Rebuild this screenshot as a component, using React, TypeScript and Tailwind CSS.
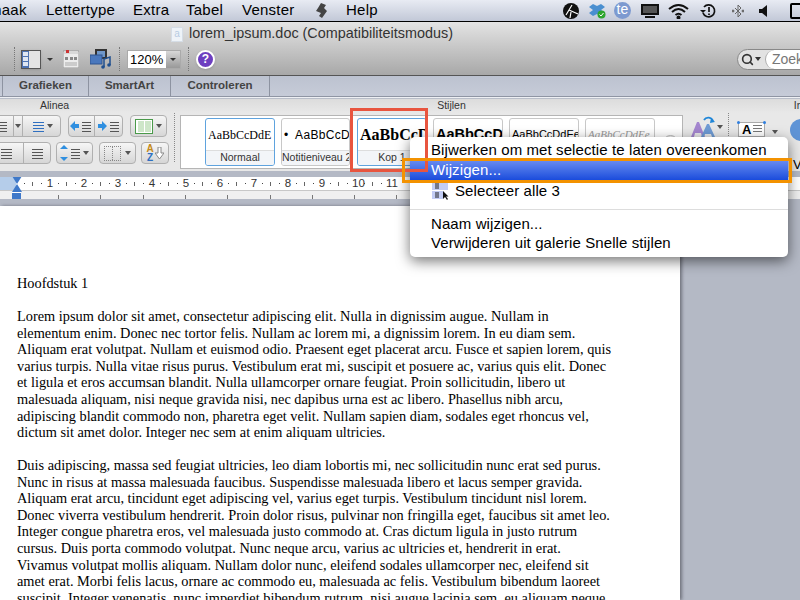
import React from "react";
import { Search } from "lucide-react";

const para1 = [
  "Lorem ipsum dolor sit amet, consectetur adipiscing elit. Nulla in dignissim augue. Nullam in",
  "elementum enim. Donec nec tortor felis. Nullam ac lorem mi, a dignissim lorem. In eu diam sem.",
  "Aliquam erat volutpat. Nullam et euismod odio. Praesent eget placerat arcu. Fusce et sapien lorem, quis",
  "varius turpis. Nulla vitae risus purus. Vestibulum erat mi, suscipit et posuere ac, varius quis elit. Donec",
  "et ligula et eros accumsan blandit. Nulla ullamcorper ornare feugiat. Proin sollicitudin, libero ut",
  "malesuada aliquam, nisi neque gravida nisi, nec dapibus urna est ac libero. Phasellus nibh arcu,",
  "adipiscing blandit commodo non, pharetra eget velit. Nullam sapien diam, sodales eget rhoncus vel,",
  "dictum sit amet dolor. Integer nec sem at enim aliquam ultricies.",
];

const para2 = [
  "Duis adipiscing, massa sed feugiat ultricies, leo diam lobortis mi, nec sollicitudin nunc erat sed purus.",
  "Nunc in risus at massa malesuada faucibus. Suspendisse malesuada libero et lacus semper gravida.",
  "Aliquam erat arcu, tincidunt eget adipiscing vel, varius eget turpis. Vestibulum tincidunt nisl lorem.",
  "Donec viverra vestibulum hendrerit. Proin dolor risus, pulvinar non fringilla eget, faucibus sit amet leo.",
  "Integer congue pharetra eros, vel malesuada justo commodo at. Cras dictum ligula in justo rutrum",
  "cursus. Duis porta commodo volutpat. Nunc neque arcu, varius ac ultricies et, hendrerit in erat.",
  "Vivamus volutpat mollis aliquam. Nullam dolor nunc, eleifend sodales ullamcorper nec, eleifend sit",
  "amet erat. Morbi felis lacus, ornare ac commodo eu, malesuada ac felis. Vestibulum bibendum laoreet",
  "suscipit. Integer venenatis, nunc imperdiet bibendum rutrum, nisi augue lacinia sem, eu aliquam neque",
];

function MenuBar() {
  return (
    <div className="h-[22px] shrink-0 flex items-center border-b border-black bg-gradient-to-b from-[#e8ebf3] to-[#c2c8d7] text-[15px] tracking-[0.25px] text-black overflow-hidden">
      <span className="ml-[-11px] w-[38px] shrink-0">maak</span>
      <span className="ml-[19px] w-[68px] shrink-0">Lettertype</span>
      <span className="ml-[19px] w-[34px] shrink-0">Extra</span>
      <span className="ml-[19px] w-[37px] shrink-0">Tabel</span>
      <span className="ml-[19px] w-[53px] shrink-0">Venster</span>
      <svg width="12" height="16" viewBox="0 0 12 16" className="ml-[20px] shrink-0">
        <path d="M6 0 L11 2 L9 5 L12 8 L7 15 L4 13 L6 10 L1 8 L3 5 Z" fill="#444" />
      </svg>
      <span className="ml-[19px] shrink-0">Help</span>
      <div className="ml-[185px] flex items-center shrink-0">
        <svg width="16" height="16" viewBox="0 0 16 16"><circle cx="8" cy="8" r="8" fill="#111" /><path d="M3 12 L9 2 M6 7 L15 11 M8 9 L7 15" stroke="#fff" strokeWidth="1.2" /></svg>
        <svg width="17" height="16" viewBox="0 0 17 16" className="ml-[10px]"><path d="M0 4 L4 1 L8 3 L12 1 L16 4 L12 7 L16 10 L12 13 L8 11 L4 13 L0 10 L4 7 Z" fill="#4a8fd0" /><circle cx="12.500" cy="11.500" r="4" fill="#2da52d" /><path d="M10.500 11.500 L12 13 L14.500 10" stroke="#fff" fill="none" /></svg>
        <div className="ml-[8px] w-[17px] h-[17px] rounded-full bg-[#7d9ad0] text-white text-[14px] tracking-normal leading-[15px] text-center">te</div>
        <svg width="18" height="16" viewBox="0 0 18 16" className="ml-[10px]"><rect x="0" y="1" width="18" height="11" fill="#111" /><rect x="2" y="3" width="14" height="7" fill="#555" /><rect x="4" y="13" width="10" height="2" fill="#111" /></svg>
        <svg width="21" height="16" viewBox="0 0 21 16" fill="none" stroke="#111" strokeWidth="2" className="ml-[9px]"><path d="M1 6 Q10.500 -2 20 6" /><path d="M4 9 Q10.500 3 17 9" /><path d="M7.500 12 Q10.500 9.500 13.500 12" /><circle cx="10.500" cy="14.500" r="1" fill="#111" /></svg>
        <svg width="16" height="16" viewBox="0 0 16 16" fill="none" stroke="#111" strokeWidth="1.700" className="ml-[11px]"><path d="M4 4 A6 6 0 1 1 3 10" /><path d="M0 7 L3 10 L6 7" fill="#111" stroke="none" /><path d="M9 4 V9 M9 10.500 V12" /></svg>
        <svg width="12" height="14" viewBox="0 0 12 14" fill="none" stroke="#666" className="ml-[16px]"><path d="M6 1 V13 L9 10 L3 4 M6 1 L9 4 L3 10" /><circle cx="1" cy="7" r="1" fill="#666" /><circle cx="11" cy="7" r="1" fill="#666" /></svg>
        <svg width="12" height="14" viewBox="0 0 12 14" className="ml-[15px]"><path d="M0 5 H3 L8 1 V13 L3 9 H0 Z" fill="#111" /></svg>
        <div className="ml-[19px] w-[12px] h-[16px] border-2 border-black rounded-[2px] shrink-0" />
      </div>
    </div>
  );
}

function Toolbar() {
  return (
    <div className="h-[54px] shrink-0 bg-gradient-to-b from-[#e4e4e4] to-[#a8a8a8] border-b border-[#555] flex flex-col">
      <div className="h-[22px] flex items-center pl-[171px] pt-[2px] text-[14.400px] text-[#333]">
        <div className="w-[12px] h-[15px] bg-[#eef3f8] border border-[#d5dde6] text-[10px] text-[#b7cbe2] leading-[12px] text-center">a</div>
        <span className="ml-[6px]">lorem_ipsum.doc (Compatibiliteitsmodus)</span>
      </div>
      <div className="flex items-center h-[30px] relative">
        <div className="ml-[14px] h-[24px] border-l border-dotted border-[#777]" />
        <div className="ml-[6px] w-[20px] h-[19px] bg-[#e4e4e4] border border-[#555] flex shadow-sm">
          <div className="w-[7px] bg-[#4f74b3] flex flex-col gap-[1px] p-[1px]">
            <div className="h-[4px] bg-[#dfe7f3]" />
            <div className="h-[4px] bg-[#dfe7f3]" />
            <div className="h-[4px] bg-[#dfe7f3]" />
          </div>
        </div>
        <div className="ml-[6px] w-0 h-0 border-x-[3px] border-x-transparent border-t-[3px] border-t-[#333]" />
        <svg width="16" height="18" viewBox="0 0 16 18" className="ml-[10px]">
          <rect x="0" y="1" width="16" height="17" fill="#ececec" stroke="#999" />
          <rect x="1" y="1" width="14" height="3" fill="#d8d8d8" />
          <rect x="3" y="0" width="3" height="3" fill="#c33" />
          <rect x="2" y="7" width="3" height="3" fill="#888" /><rect x="7" y="7" width="3" height="3" fill="#888" /><rect x="11" y="7" width="3" height="3" fill="#888" />
          <path d="M2 13 H14 M2 15 H14" stroke="#aaa" />
        </svg>
        <svg width="21" height="20" viewBox="0 0 21 20" className="ml-[11px]">
          <rect x="5" y="0" width="12" height="10" fill="#333" />
          <rect x="7" y="2" width="8" height="6" fill="#6f97c9" />
          <rect x="0" y="6" width="12" height="9" fill="#4a78bd" stroke="#2f5590" />
          <path d="M14 18 V10 L20 8 V16" stroke="#1f4f8f" strokeWidth="1.500" fill="none" />
          <circle cx="13" cy="18" r="1.800" fill="#1f4f8f" />
          <circle cx="19" cy="16" r="1.800" fill="#1f4f8f" />
        </svg>
        <div className="ml-[8px] h-[24px] border-l border-dotted border-[#777]" />
        <div className="ml-[7px] w-[54px] h-[19px] flex border border-[#aaa] text-[13px] bg-white items-center">
          <span className="flex-1 pl-[2px] leading-none">120%</span>
          <div className="w-[14px] h-full bg-gradient-to-b from-[#d8d8d8] to-[#999] flex items-center justify-center">
            <div className="w-0 h-0 border-x-[3px] border-x-transparent border-t-[3px] border-t-[#333]" />
          </div>
        </div>
        <div className="ml-[7px] h-[24px] border-l border-dotted border-[#777]" />
        <div className="ml-[7px] w-[19px] h-[19px] rounded-full bg-[#6d3fc0] border-2 border-white shadow text-white text-[12px] leading-[15px] font-bold text-center">?</div>
        <div className="ml-auto w-[64px] h-[21px] rounded-l-full border border-[#888] bg-[#e2e2e2] flex items-center pl-[3px] mr-[-1px]">
          <Search size={13} strokeWidth={3} className="text-[#333] shrink-0" />
          <div className="w-0 h-0 ml-[1px] border-x-[3px] border-x-transparent border-t-[4px] border-t-[#333]" />
          <div className="ml-[4px] flex-1 h-full rounded-l-full bg-white border-l border-[#aaa] text-[14px] text-[#777] pl-[6px] leading-[18px] overflow-hidden">Zoek</div>
        </div>
      </div>
    </div>
  );
}

function Tabs() {
  return (
    <div className="h-[23px] shrink-0 bg-gradient-to-b from-[#bcc2d0] to-[#c8cdd9] flex flex-col text-[11.500px] font-bold text-[#444]">
      <div className="h-[20px] flex">
        <div className="w-[3px] border-r border-[#8d93a1]" />
        <div className="w-[86px] border-r border-[#8d93a1] flex items-center justify-center">Grafieken</div>
        <div className="w-[82px] border-r border-[#8d93a1] flex items-center justify-center">SmartArt</div>
        <div className="w-[99px] border-r border-[#8d93a1] flex items-center justify-center">Controleren</div>
      </div>
      <div className="h-[1px] bg-[#8f95a3]" />
      <div className="h-[1px] bg-[#eef0f4]" />
      <div className="h-[1px] bg-[#b9bec9]" />
    </div>
  );
}

function Btn({ w, children, className = "" }: { w: string; children?: React.ReactNode; className?: string }) {
  return (
    <div className={`h-[22px] ${w} shrink-0 rounded-[4px] border border-[#b0b0b0] bg-gradient-to-b from-[#f6f6f6] to-[#d6d6d6] flex items-center justify-center divide-x divide-[#b0b0b0] ${className}`}>
      {children}
    </div>
  );
}

function Seg({ w, children }: { w: string; children?: React.ReactNode }) {
  return <div className={`${w} h-full shrink-0 flex items-center justify-center gap-[2px]`}>{children}</div>;
}

function Lines({ n = 4, color = "#555", w = 13 }: { n?: number; color?: string; w?: number }) {
  return (
    <svg width={w} height="13" viewBox={`0 0 ${w} 13`} stroke={color} strokeWidth="1" className="shrink-0">
      {Array.from({ length: n }).map((_, i) => (
        <path key={i} d={`M1 ${2 + i * 3}.5 H${w - 1}`} />
      ))}
    </svg>
  );
}

function Caret() {
  return <div className="w-0 h-0 shrink-0 border-x-[3px] border-x-transparent border-t-[4px] border-t-[#555]" />;
}

function Arrow({ dir }: { dir: "left" | "right" }) {
  return (
    <svg width="9" height="10" viewBox="0 0 9 10" className="shrink-0">
      <path d={dir === "left" ? "M0 5 L5 0 V3 H9 V7 H5 V10 Z" : "M9 5 L4 0 V3 H0 V7 H4 V10 Z"} fill="#2f8fe0" />
    </svg>
  );
}

function StyleCard({ sample, label, active, w = "w-[70px]" }: { sample: React.ReactNode; label?: string; active?: boolean; w?: string }) {
  return (
    <div className={`${w} h-[48px] shrink-0 bg-white rounded-[3px] border ${active ? "border-[#5fa3de]" : "border-[#c8c8c8]"} flex flex-col overflow-hidden`}>
      <div className="h-[31px] shrink-0 flex items-center pl-[2px] whitespace-nowrap overflow-hidden">{sample}</div>
      <div className="flex-1 bg-[#f3f5f8] border-t border-[#ddd] text-[10.500px] text-[#333] text-center leading-[13px] whitespace-nowrap overflow-hidden">{label}</div>
    </div>
  );
}

function Ribbon() {
  return (
    <div className="h-[72px] shrink-0 bg-[#e8e8e8] flex flex-col">
      <div className="h-[14px] flex text-[10.500px] text-[#333] items-center bg-gradient-to-b from-[#dcdcdc] to-[#e8e8e8]">
        <span className="ml-[40px]">Alinea</span>
        <span className="ml-[368px]">Stijlen</span>
        <span className="ml-[328px]">In</span>
      </div>
      <div className="flex-1 flex pt-[2px] overflow-hidden">
        <div className="w-[174px] shrink-0 flex flex-col gap-[5px] overflow-hidden">
          <div className="flex items-center">
            <Btn w="w-[72px]" className="ml-[-11px]">
              <Seg w="w-[25px]"><Lines /></Seg>
              <Seg w="w-[9px]"><Caret /></Seg>
              <Seg w="w-[38px]"><Lines color="#2f6fc0" /><Caret /></Seg>
            </Btn>
            <Btn w="w-[55px]" className="ml-[7px]">
              <Seg w="w-[27px]"><Arrow dir="left" /><Lines w={11} /></Seg>
              <Seg w="w-[28px]"><Arrow dir="right" /><Lines w={11} /></Seg>
            </Btn>
            <Btn w="w-[37px]" className="ml-[7px] gap-[3px] divide-x-0">
              <div className="w-[18px] h-[15px] border border-[#4a9a4a] bg-white flex justify-center gap-[1px] p-[1px]">
                <div className="w-[6px] bg-[#cde6c8]" />
                <div className="w-[6px] bg-[#cde6c8]" />
              </div>
              <Caret />
            </Btn>
          </div>
          <div className="flex items-center">
            <Btn w="w-[62px]" className="ml-[-11px]">
              <Seg w="w-[35px]"><Lines /></Seg>
              <Seg w="w-[27px]"><Lines n={5} /></Seg>
            </Btn>
            <Btn w="w-[37px]" className="ml-[5px] gap-[2px] divide-x-0">
              <svg width="8" height="16" viewBox="0 0 8 16" className="shrink-0"><path d="M4 0 L8 4 H0 Z M4 16 L8 12 H0 Z" fill="#2f8fe0" /></svg>
              <Lines w={11} />
              <Caret />
            </Btn>
            <Btn w="w-[37px]" className="ml-[6px] gap-[4px] divide-x-0">
              <div className="w-[17px] h-[15px] border border-dotted border-[#888] relative">
                <div className="absolute left-[7px] top-0 bottom-0 border-l border-dotted border-[#888]" />
              </div>
              <Caret />
            </Btn>
            <Btn w="w-[28px]" className="ml-[5px] gap-[1px] divide-x-0">
              <div className="flex flex-col items-center text-[10px] font-bold leading-[9px]">
                <span className="text-[#c48a1a]">A</span>
                <span className="text-[#2f6fc0]">Z</span>
              </div>
              <svg width="9" height="12" viewBox="0 0 9 12" className="shrink-0"><path d="M3 0 H6 V6 H9 L4.500 12 L0 6 H3 Z" fill="#fff" stroke="#888" /></svg>
            </Btn>
          </div>
        </div>
        <div className="h-[52px] border-l border-dotted border-[#888] mt-[-5px]" />
        <div className="ml-[5px] w-[503px] h-[54px] shrink-0 bg-white border border-[#b5b5b5] flex items-center pl-[24px] overflow-hidden">
          <StyleCard active label="Normaal" sample={<span className="font-['Liberation_Serif',serif] text-[12px]">AaBbCcDdE</span>} />
          <div className="ml-[6px]"><StyleCard w="w-[69px]" label="Notitieniveau 2" sample={<span className="text-[12px] tracking-[0.3px]">•&nbsp; AaBbCcD</span>} /></div>
          <div className="ml-[7px]"><StyleCard active label="Kop 1" sample={<span className="font-['Liberation_Serif',serif] text-[16px] font-bold">AaBbCcD</span>} /></div>
          <div className="ml-[6px]"><StyleCard label="" sample={<span className="text-[14.500px] font-bold">AaBbCcDd</span>} /></div>
          <div className="ml-[6px]"><StyleCard label="" sample={<span className="text-[11px]">AaBbCcDdEe</span>} /></div>
          <div className="ml-[6px]"><StyleCard label="" sample={<span className="text-[11px] italic text-[#999] font-['Liberation_Serif',serif]">AaBbCcDdEe</span>} /></div>
          <div className="ml-[8px] w-[15px] h-[15px] rounded-full border border-[#bbb] bg-[#f4f4f4] shrink-0" />
        </div>
        <div className="ml-[7px] w-[36px] h-[24px] shrink-0 flex items-center gap-[1px]">
          <svg width="26" height="22" viewBox="0 0 26 22" className="shrink-0">
            <path d="M1 21 L7 6 H9 L15 21 H12 L11 17 H5 L4 21 Z" fill="#a486cf" />
            <path d="M11 21 L17 8 H19 L25 21 H22 L21 18 H15 L14 21 Z" fill="#6f9bd4" />
            <path d="M14 4 A5 5 0 0 1 23 5" stroke="#1f86d8" strokeWidth="1.800" fill="none" />
            <path d="M21 2 L25 6 L20 7 Z" fill="#1f86d8" />
          </svg>
          <Caret />
        </div>
        <div className="ml-[2px] h-[52px] border-l border-dotted border-[#888] mt-[-5px]" />
        <div className="ml-[9px] mt-[7px] w-[27px] h-[15px] shrink-0 border border-[#aaa] bg-white flex items-center gap-[1px] pl-[3px] relative">
          <span className="text-[13px] font-bold leading-none">A</span>
          <Lines n={3} w={11} color="#777" />
          <div className="absolute left-[-2px] top-[-2px] w-[3px] h-[3px] bg-[#2f7fe0] rounded-full" />
          <div className="absolute right-[-2px] top-[-2px] w-[3px] h-[3px] bg-[#2f7fe0] rounded-full" />
        </div>
        <div className="ml-[7px] mt-[15px] shrink-0"><Caret /></div>
        <div className="ml-[12px] mt-[4px] w-[14px] h-[22px] shrink-0 rounded-l-full bg-[#5f94d6]" />
      </div>
    </div>
  );
}

function Ruler() {
  const nums = Array.from({ length: 11 }, (_, i) => i + 1);
  const lower = [58, 100, 143, 185, 227, 270, 312, 354, 396];
  return (
    <div className="h-[35px] shrink-0 bg-[#b4b9c5] flex flex-col pt-[6px]">
      <div className="h-[22px] relative overflow-hidden flex flex-col">
        <div className="h-[13px] bg-white flex items-center text-[11.500px] text-[#333] tracking-normal">
          <div className="w-[16px] h-full bg-[#b5cdea] shrink-0" />
          <div className="w-[4px] shrink-0" />
          {nums.map((n) => (
            <div key={n} className="w-[34px] shrink-0 flex items-center">
              <div className="w-[8px] flex justify-center"><div className="w-[1px] h-[1px] bg-[#444]" /></div>
              <div className="w-[9px] flex justify-center"><div className="w-[1px] h-[4px] bg-[#666]" /></div>
              <div className="w-[9px] flex justify-center"><div className="w-[1px] h-[1px] bg-[#444]" /></div>
              <span className="w-[8px] text-center leading-none">{n}</span>
            </div>
          ))}
        </div>
        <div className="h-[9px] bg-[#f0f0f0] border-t border-[#c8c8c8] flex items-end">
          {lower.map((x, i) => (
            <div key={x} className="w-[1px] h-[4px] bg-[#777] shrink-0" style={{ marginLeft: i === 0 ? x : x - lower[i - 1] - 1 }} />
          ))}
        </div>
        <div className="absolute left-[11px] top-[-1px] w-[11px] h-[23px] flex flex-col items-center">
          <div className="w-0 h-0 border-x-[5px] border-x-transparent border-t-[8px] border-t-[#3f79c9]" />
          <div className="w-0 h-0 border-x-[5px] border-x-transparent border-b-[8px] border-b-[#3f79c9]" />
          <div className="w-[9px] h-[7px] bg-[#3f79c9] border-t border-white" />
        </div>
      </div>
    </div>
  );
}

function ContextMenu() {
  return (
    <div className="absolute left-[410px] top-[137px] w-[378px] h-[120px] bg-white rounded-[5px] shadow-[0_4px_14px_rgba(0,0,0,0.55)] text-[15px] tracking-[0.1px] text-black leading-[18px] pt-[4px]">
      <div className="pl-[21px] h-[19px]">Bijwerken om met selectie te laten overeenkomen</div>
      <div className="pl-[21px] h-[20px] bg-gradient-to-b from-[#6a8cf0] to-[#1a4bdc] text-white font-medium leading-[19px]">Wijzigen...</div>
      <div className="pl-[22px] h-[22px] flex items-center gap-[5px]">
        <svg width="18" height="18" viewBox="0 0 18 18" className="shrink-0">
          <rect x="0" y="0" width="16" height="8" fill="#c3cdf5" />
          <rect x="0" y="9" width="11" height="8" fill="#c3cdf5" />
          <path d="M4 1 V7 M6 1 V7 M4 10 V16 M6 10 V16" stroke="#222" />
          <path d="M11 9 V17 L13 15 L15 18 L16 17 L14 14.500 H16.500 Z" fill="#111" />
        </svg>
        <span>Selecteer alle 3</span>
      </div>
      <div className="border-t border-[#ddd] mt-[7px] mb-[5px]" />
      <div className="pl-[21px] h-[19px]">Naam wijzigen...</div>
      <div className="pl-[21px] h-[19px]">Verwijderen uit galerie Snelle stijlen</div>
    </div>
  );
}

export default function App() {
  return (
    <div className="w-[800px] h-[600px] relative overflow-hidden font-['Liberation_Sans',sans-serif] flex flex-col">
      <MenuBar />
      <Toolbar />
      <Tabs />
      <Ribbon />
      <Ruler />
      <div className="flex-1 flex bg-[#b4b9c5] min-h-0">
        <div className="w-[680px] bg-white shrink-0 pl-[17px] pt-[69px] font-['Liberation_Serif',serif] text-[14.330px] leading-[16.570px] text-black whitespace-nowrap overflow-hidden shadow-[2px_0_3px_rgba(60,60,70,0.55)]">
          <p className="mb-[16.570px]">Hoofdstuk 1</p>
          <p className="mb-[16.570px]">{para1.map((l) => <span key={l} className="block">{l}</span>)}</p>
          <p>{para2.map((l) => <span key={l} className="block">{l}</span>)}</p>
        </div>
      </div>
      <ContextMenu />
      <div className="absolute left-[350px] top-[108px] w-[78px] h-[64px] border-[3px] border-[#e8553f]" />
      <div className="absolute left-[402px] top-[158px] w-[390px] h-[25px] border-[3px] border-[#f39200]" />
      <span className="absolute left-[793px] top-[158px] text-[13px] text-black leading-none">V</span>
    </div>
  );
}
